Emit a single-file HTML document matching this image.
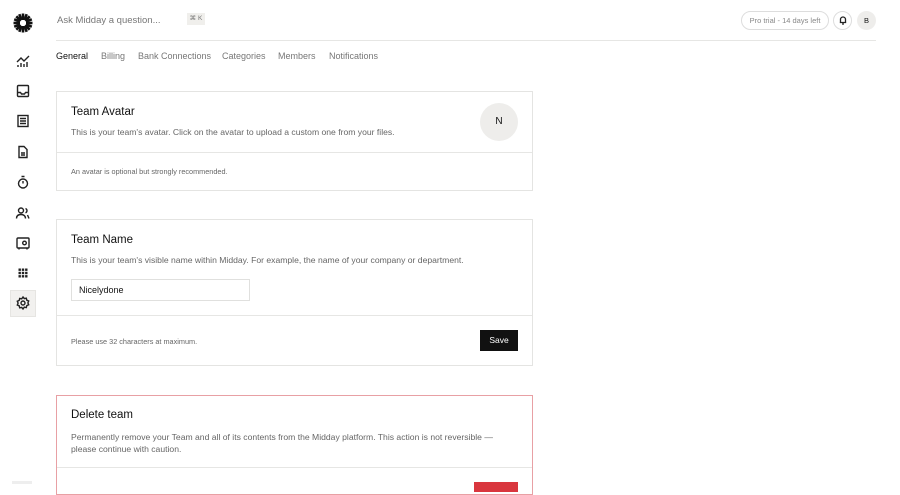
<!DOCTYPE html><html><head><style>
*{box-sizing:border-box;margin:0;padding:0}
body{width:900px;height:484px;overflow:hidden;background:#fff;font-family:"Liberation Sans",sans-serif;color:#121212;position:relative}
.a{position:absolute}
.card{position:absolute;left:56px;width:477px;border:1px solid #e4e4e2;background:#fff}
.t{font-size:11.5px;color:#111}
.d{font-size:8.6px;color:#666}
.s{font-size:7.3px;color:#666}
.ic{position:absolute;left:15px;width:16px;height:16px}
svg{fill:none;stroke:#222;stroke-width:1.4}
.tab{position:absolute;top:51px;font-size:9px;color:#777}
</style></head><body>
<svg class="a" style="left:13px;top:13px" width="20" height="20" viewBox="0 0 20 20"><g stroke="#111" stroke-width="2.6"><line x1="10" y1="0.5" x2="10" y2="7"/><line x1="10" y1="13" x2="10" y2="19.5"/><line x1="0.5" y1="10" x2="7" y2="10"/><line x1="13" y1="10" x2="19.5" y2="10"/><line x1="3.3" y1="3.3" x2="7.8" y2="7.8"/><line x1="12.2" y1="12.2" x2="16.7" y2="16.7"/><line x1="16.7" y1="3.3" x2="12.2" y2="7.8"/><line x1="7.8" y1="12.2" x2="3.3" y2="16.7"/><line x1="6.3" y1="1.2" x2="8.5" y2="7"/><line x1="13.7" y1="18.8" x2="11.5" y2="13"/><line x1="1.2" y1="13.7" x2="7" y2="11.5"/><line x1="18.8" y1="6.3" x2="13" y2="8.5"/><line x1="13.7" y1="1.2" x2="11.5" y2="7"/><line x1="6.3" y1="18.8" x2="8.5" y2="13"/><line x1="1.2" y1="6.3" x2="7" y2="8.5"/><line x1="18.8" y1="13.7" x2="13" y2="11.5"/></g></svg>
<div class="a" style="left:57px;top:15px;font-size:9.5px;color:#777">Ask Midday a question...</div>
<div class="a" style="left:187px;top:13px;width:18px;height:12px;background:#f0efec;font-size:6.5px;color:#777;text-align:center;line-height:12px">⌘ K</div>
<div class="a" style="left:56px;top:40px;width:820px;height:1px;background:#e6e6e4"></div>
<div class="a" style="left:741px;top:11px;width:88px;height:19px;border:1px solid #ddd;border-radius:10px;font-size:7.5px;color:#888;text-align:center;line-height:17px">Pro trial - 14 days left</div>
<div class="a" style="left:833px;top:11px;width:19px;height:19px;border:1px solid #ddd;border-radius:50%"></div>
<svg class="a" style="left:838px;top:15px" width="10" height="10" viewBox="0 0 10 10"><path d="M2.5 7.5V4.5a2.5 2.5 0 0 1 5 0v3H2.5M1.8 7.5h6.4M4 9h2" stroke-width="1.3"/></svg>
<div class="a" style="left:857px;top:11px;width:19px;height:19px;background:#eeedeb;border-radius:50%;font-size:7.5px;text-align:center;line-height:19px">B</div>
<div class="tab" style="left:56px;color:#111">General</div>
<div class="tab" style="left:101px">Billing</div>
<div class="tab" style="left:138px">Bank Connections</div>
<div class="tab" style="left:222px">Categories</div>
<div class="tab" style="left:278px">Members</div>
<div class="tab" style="left:329px">Notifications</div>
<svg class="ic" style="top:53px" viewBox="0 0 16 16"><path d="M2 9l4-4 3 3 5-5M3 14v-2M6 14v-4M9 14v-3M12 14v-5"/></svg>
<svg class="ic" style="top:83px" viewBox="0 0 16 16"><rect x="2.5" y="2.5" width="11" height="11" rx="1"/><path d="M2.5 9.5h3l1 1.5h3l1-1.5h3"/></svg>
<svg class="ic" style="top:113px" viewBox="0 0 16 16"><rect x="3" y="2.5" width="10" height="11"/><path d="M5 5.5h6M5 8h6M5 10.5h6"/></svg>
<svg class="ic" style="top:144px" viewBox="0 0 16 16"><path d="M4 2.5h5l3 3v8H4zM6 9h4M6 11h4"/></svg>
<svg class="ic" style="top:174px" viewBox="0 0 16 16"><circle cx="8" cy="9.5" r="4.5"/><path d="M6.5 2.5h3M8 9.5V7"/></svg>
<svg class="ic" style="top:205px" viewBox="0 0 16 16"><circle cx="6" cy="5.5" r="2.5"/><path d="M1.5 13.5c0-3 2-4 4.5-4s4.5 1 4.5 4M10.5 3.5a2.3 2.3 0 0 1 0 4.3M12.5 10l1.5 3.5"/></svg>
<svg class="ic" style="top:235px" viewBox="0 0 16 16"><rect x="2" y="3" width="12" height="10" rx="1"/><circle cx="9.5" cy="8" r="1.8"/><path d="M4 13v1.5M12 13v1.5"/></svg>
<svg class="ic" style="top:265px" viewBox="0 0 16 16"><g fill="#222" stroke="none"><rect x="3.5" y="3.5" width="2.4" height="2.4"/><rect x="6.8" y="3.5" width="2.4" height="2.4"/><rect x="10.1" y="3.5" width="2.4" height="2.4"/><rect x="3.5" y="6.8" width="2.4" height="2.4"/><rect x="6.8" y="6.8" width="2.4" height="2.4"/><rect x="10.1" y="6.8" width="2.4" height="2.4"/><rect x="3.5" y="10.1" width="2.4" height="2.4"/><rect x="6.8" y="10.1" width="2.4" height="2.4"/><rect x="10.1" y="10.1" width="2.4" height="2.4"/></g></svg>
<div class="a" style="left:10px;top:290px;width:26px;height:27px;background:#f2f1ef;border:1px solid #e6e5e2"></div>
<svg class="ic" style="top:295px" viewBox="0 0 16 16"><circle cx="8" cy="8" r="2"/><path d="M8 2l1.3 1.6 2-.4.5 2 1.9.8-.8 1.9.8 1.9-1.9.8-.5 2-2-.4L8 14l-1.3-1.6-2 .4-.5-2-1.9-.8.8-1.9-.8-1.9 1.9-.8.5-2 2 .4z"/></svg>
<div class="a" style="left:12px;top:481px;width:20px;height:3px;background:#eee"></div>

<div class="card" style="top:91px;height:100px">
 <div class="a t" style="left:14px;top:14px">Team Avatar</div>
 <div class="a d" style="left:14px;top:35px">This is your team's avatar. Click on the avatar to upload a custom one from your files.</div>
 <div class="a" style="left:423px;top:11px;width:38px;height:38px;border-radius:50%;background:#eeedeb;font-size:10px;text-align:center;line-height:38px">N</div>
 <div class="a" style="left:0;top:60px;width:475px;height:1px;background:#e6e6e4"></div>
 <div class="a s" style="left:14px;top:75px">An avatar is optional but strongly recommended.</div>
</div>
<div class="card" style="top:219px;height:147px">
 <div class="a t" style="left:14px;top:14px">Team Name</div>
 <div class="a d" style="left:14px;top:35px">This is your team's visible name within Midday. For example, the name of your company or department.</div>
 <div class="a" style="left:14px;top:59px;width:179px;height:22px;border:1px solid #e0e0de;font-size:9px;line-height:20px;padding-left:7px">Nicelydone</div>
 <div class="a" style="left:0;top:95px;width:475px;height:1px;background:#e6e6e4"></div>
 <div class="a s" style="left:14px;top:117px">Please use 32 characters at maximum.</div>
 <div class="a" style="left:423px;top:110px;width:38px;height:21px;background:#111;color:#fff;font-size:8.5px;text-align:center;line-height:21px">Save</div>
</div>
<div class="card" style="top:395px;height:100px;border-color:#e8a0a4">
 <div class="a t" style="left:14px;top:13px">Delete team</div>
 <div class="a d" style="left:14px;top:35px;width:440px;line-height:12px">Permanently remove your Team and all of its contents from the Midday platform. This action is not reversible — please continue with caution.</div>
 <div class="a" style="left:0;top:71px;width:475px;height:1px;background:#e6e6e4"></div>
 <div class="a" style="left:417px;top:86px;width:44px;height:10px;background:#d9363e"></div>
</div>
</body></html>
